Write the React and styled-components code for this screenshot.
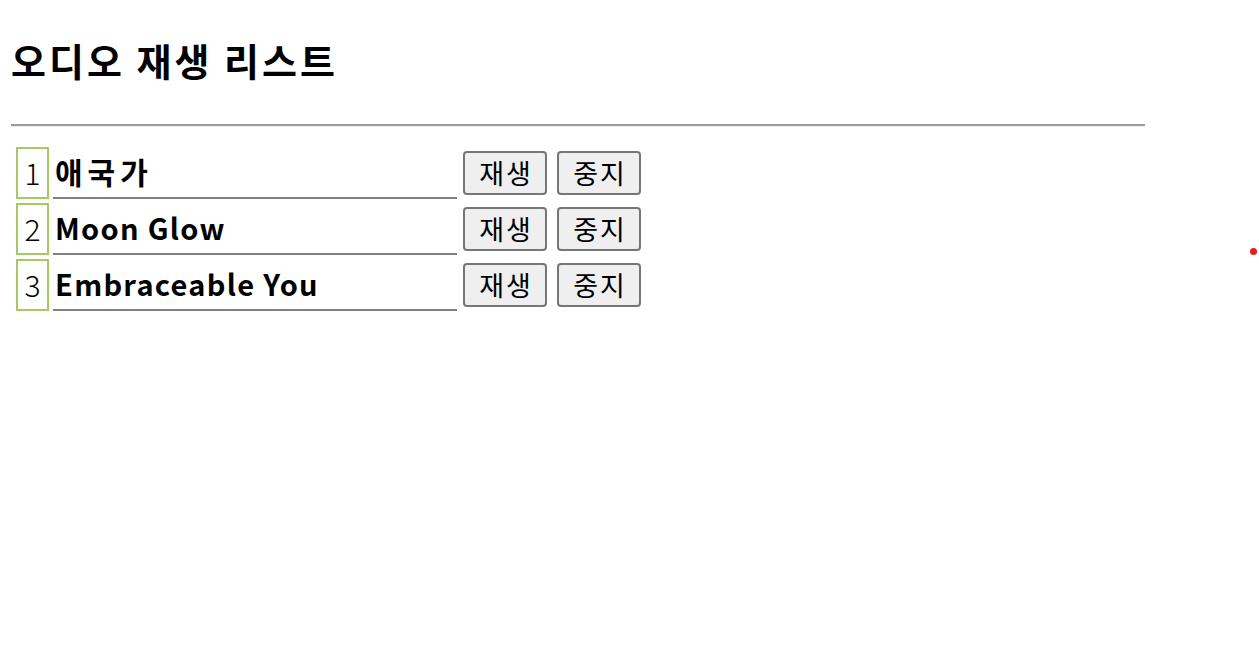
import React from 'react'
import styled, { createGlobalStyle } from 'styled-components'

const GlobalStyle = createGlobalStyle`
  html, body {
    margin: 0;
    padding: 0;
    background: #fff;
  }
  body {
    font-family: "Noto Sans CJK KR", "Noto Sans", sans-serif;
    color: #000;
  }
`

const Page = styled.div`
  position: relative;
  width: 1259px;
  height: 648px;
  padding: 0 11px;
  box-sizing: border-box;
  overflow: hidden;
`

const Title = styled.h2`
  margin: 0;
  padding-top: 37px;
  font-size: 38px;
  font-weight: 700;
  line-height: 46px;
  letter-spacing: 3px;
`

const Divider = styled.hr`
  width: 1134px;
  height: 0;
  margin: 41px 0 20px;
  border: 0;
  border-top: 2px solid #9d9d9d;
  border-bottom: 1px solid #ececec;
`

const List = styled.div`
  display: grid;
  grid-template-columns: 33px 404px auto;
  grid-auto-rows: 52px;
  column-gap: 4px;
  row-gap: 4px;
  padding-left: 5px;
  width: max-content;
`

const Num = styled.div`
  box-sizing: border-box;
  border: 2px solid #a6c963;
  display: flex;
  align-items: center;
  justify-content: center;
  padding-bottom: 2px;
  font-size: 30px;
  font-weight: 300;
`

const Song = styled.div`
  box-sizing: border-box;
  border-bottom: 2px solid #808080;
  display: flex;
  align-items: center;
  padding: 0 2px 2px;
  font-size: ${(p) => (p.$hangul ? '30px' : '29px')};
  font-weight: 700;
  letter-spacing: ${(p) => (p.$hangul ? '5px' : '1.3px')};
`

const Controls = styled.div`
  display: flex;
  align-items: center;
  gap: 10px;
  padding-left: 2px;
`

const Button = styled.button`
  width: 84px;
  height: 44px;
  padding: 0 0 2px 2px;
  box-sizing: border-box;
  border: 2px solid #767676;
  border-radius: 4px;
  background: #efefef;
  font-family: "Noto Sans CJK KR", sans-serif;
  font-size: 27px;
  letter-spacing: 2px;
  color: #000;
`

const Dot = styled.span`
  position: absolute;
  left: 1250px;
  top: 248px;
  width: 7px;
  height: 7px;
  border-radius: 50%;
  background: #e0201f;
`

const songs = ['애국가', 'Moon Glow', 'Embraceable You']

export default function App() {
  return (
    <Page>
      <GlobalStyle />
      <Title>오디오 재생 리스트</Title>
      <Divider />
      <List>
        {songs.map((s, i) => (
          <React.Fragment key={s}>
            <Num>{i + 1}</Num>
            <Song $hangul={/[가-힣]/.test(s)}>{s}</Song>
            <Controls>
              <Button>재생</Button>
              <Button>중지</Button>
            </Controls>
          </React.Fragment>
        ))}
      </List>
      <Dot />
    </Page>
  )
}
